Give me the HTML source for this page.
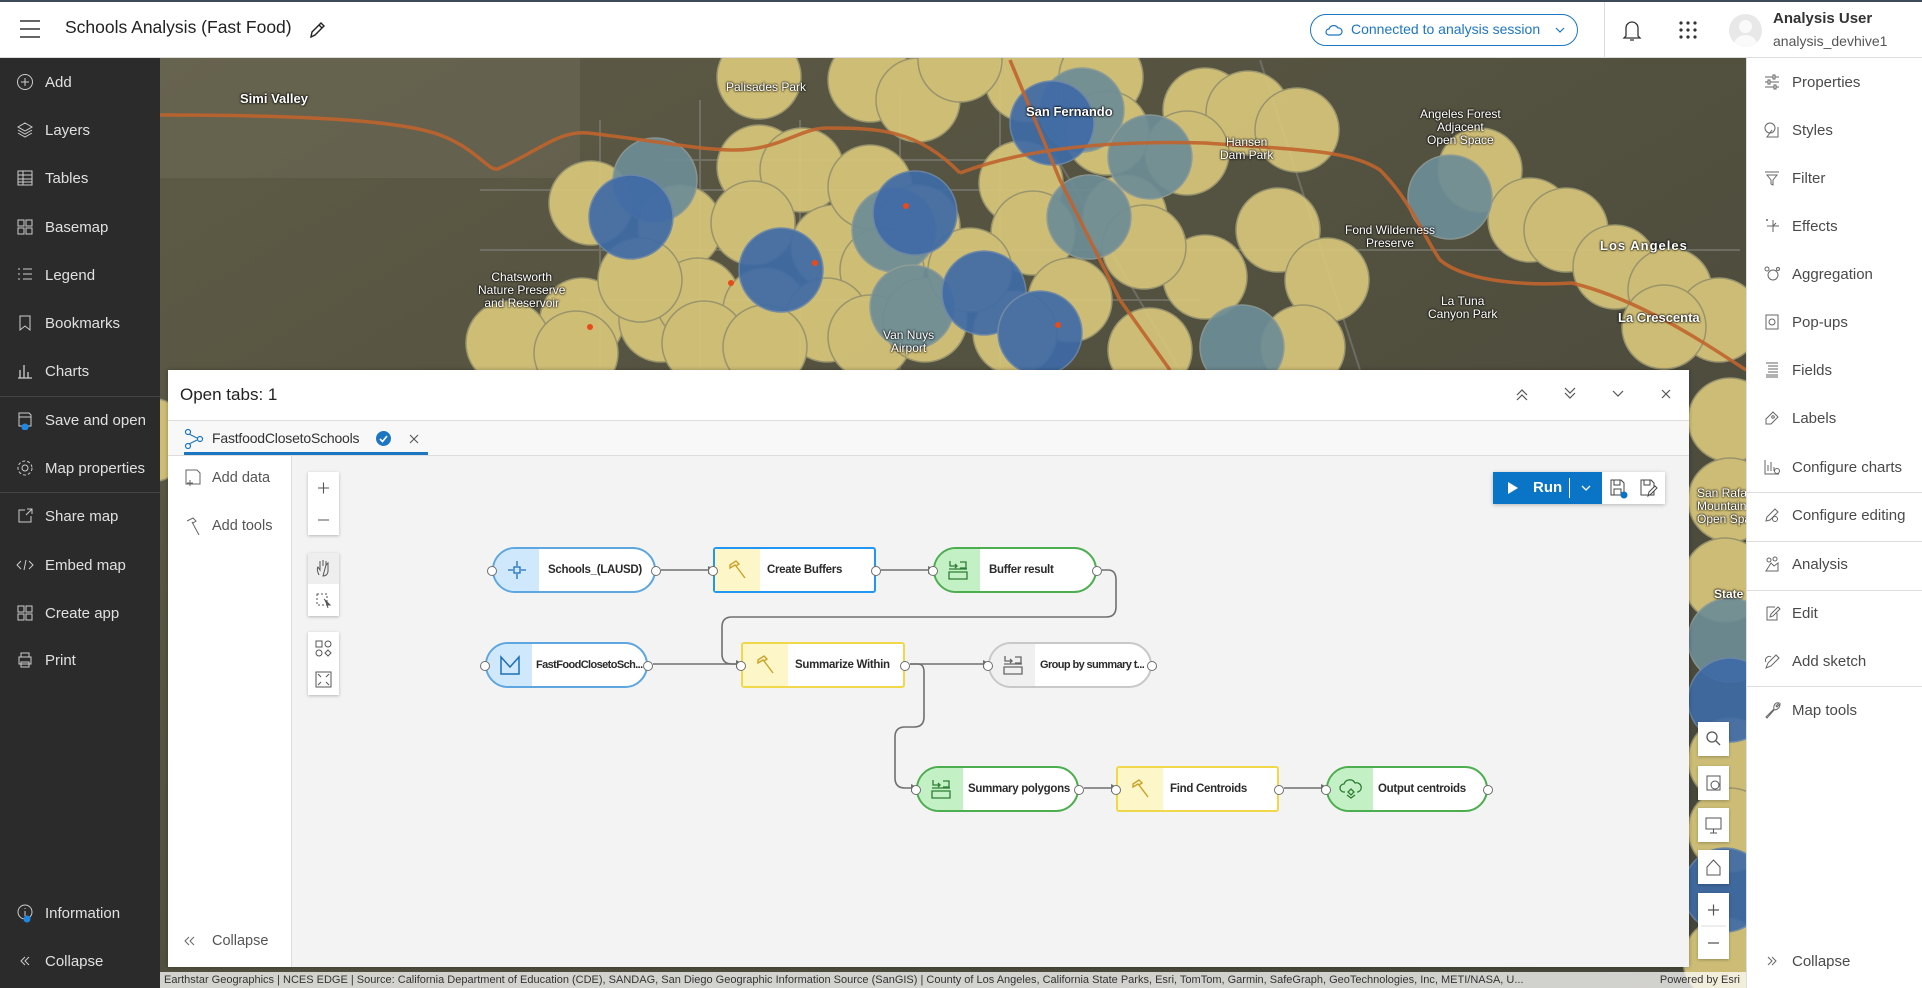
<!DOCTYPE html>
<html><head><meta charset="utf-8"><style>
*{box-sizing:border-box;margin:0;padding:0}
body{width:1922px;height:988px;overflow:hidden;font-family:"Liberation Sans",sans-serif;background:#fff;position:relative;color:#323232}
.abs{position:absolute}
#hdr{left:0;top:0;width:1922px;height:58px;background:#fff;border-top:2px solid #3d4a57;border-bottom:1px solid #ddd}
#ls{left:0;top:58px;width:160px;height:930px;background:#2b2b2b}
.li{position:absolute;left:0;width:160px;height:40px;color:#e0e0e0;font-size:15px;display:flex;align-items:center}
.li svg{position:absolute;left:16px}
.li span{position:absolute;left:45px}
.dv{position:absolute;left:0;width:160px;height:1px;background:#444}
#rs{left:1746px;top:58px;width:176px;height:930px;background:#fff;border-left:1px solid #ddd}
.ri{position:absolute;left:0;width:176px;height:40px;color:#4a4a4a;font-size:15px;display:flex;align-items:center}
.ri svg{position:absolute;left:16px}
.ri span{position:absolute;left:45px}
.rdv{position:absolute;left:0;width:176px;height:1px;background:#ddd}
.node{position:absolute;height:46px;background:#fff;border:2px solid;display:flex;align-items:center;font-size:11.5px;font-weight:bold;letter-spacing:-0.3px;color:#2b2b2b;overflow:visible}
.node .ic{position:absolute;left:0;top:0;bottom:0;width:45px;display:flex;align-items:center;justify-content:center}
.node .tx{position:absolute;left:54px;white-space:nowrap}
.port{position:absolute;top:17px;width:10px;height:10px;border-radius:50%;background:#fff;border:1.5px solid #6e6e6e}
.lbl{position:absolute;color:#fff;font-size:12px;text-shadow:0 0 2px #000,0 0 2px #000;text-align:center;line-height:13px}
.tb{position:absolute;background:#fff;box-shadow:0 1px 3px rgba(0,0,0,.25);width:31px}
</style></head><body>

<!-- MAP -->
<svg class="abs" style="left:0;top:0" width="1922" height="988">
<defs>
<linearGradient id="mg" x1="0" y1="0" x2="1" y2="1"><stop offset="0" stop-color="#5e5c46"/><stop offset=".4" stop-color="#545240"/><stop offset="1" stop-color="#46463a"/></linearGradient>
</defs>
<rect x="160" y="58" width="1586" height="930" fill="url(#mg)"/>
<rect x="160" y="58" width="420" height="120" fill="#6d6a58" opacity=".5"/>
<g fill="none" stroke="#8a8a86" stroke-width="2" opacity=".5">
<path d="M480 190H1100M480 250H1740M580 300H1200M600 120V370M700 100V370M800 120V370M900 90V370M1000 60V370M660 160H1000"/>
<path d="M1000 60L1180 370M1260 60L1360 370"/>
</g>
<g fill="#d8c67a" opacity=".92" stroke="#9f9a70" stroke-width="1.5">
<circle cx="759" cy="77" r="42"/><circle cx="870" cy="80" r="42"/><circle cx="918" cy="100" r="42"/><circle cx="591" cy="203" r="42"/><circle cx="759" cy="167" r="42"/><circle cx="802" cy="170" r="42"/><circle cx="680" cy="227" r="42"/><circle cx="753" cy="223" r="42"/><circle cx="833" cy="247" r="42"/><circle cx="870" cy="187" r="42"/><circle cx="918" cy="227" r="42"/><circle cx="882" cy="270" r="42"/><circle cx="582" cy="320" r="42"/><circle cx="508" cy="343" r="42"/><circle cx="576" cy="353" r="42"/><circle cx="661" cy="320" r="42"/><circle cx="698" cy="300" r="42"/><circle cx="765" cy="310" r="42"/><circle cx="827" cy="320" r="42"/><circle cx="870" cy="337" r="42"/><circle cx="925" cy="320" r="42"/><circle cx="704" cy="343" r="42"/><circle cx="765" cy="347" r="42"/>
<circle cx="1027" cy="80" r="42"/><circle cx="1101" cy="77" r="42"/><circle cx="1205" cy="110" r="42"/><circle cx="1248" cy="113" r="42"/><circle cx="1297" cy="130" r="42"/><circle cx="1187" cy="153" r="42"/><circle cx="1107" cy="133" r="42"/><circle cx="1021" cy="183" r="42"/><circle cx="1125" cy="217" r="42"/><circle cx="1033" cy="233" r="42"/><circle cx="1278" cy="230" r="42"/><circle cx="1327" cy="280" r="42"/><circle cx="1205" cy="277" r="42"/><circle cx="1144" cy="247" r="42"/><circle cx="1070" cy="300" r="42"/><circle cx="1015" cy="333" r="42"/><circle cx="1150" cy="350" r="42"/><circle cx="1303" cy="347" r="42"/><circle cx="1480" cy="170" r="42"/><circle cx="1530" cy="220" r="42"/><circle cx="1566" cy="230" r="42"/><circle cx="1615" cy="267" r="42"/><circle cx="1670" cy="290" r="42"/><circle cx="1719" cy="320" r="42"/><circle cx="1664" cy="327" r="42"/><circle cx="960" cy="60" r="42"/><circle cx="970" cy="270" r="42"/><circle cx="640" cy="280" r="42"/>
<circle cx="1730" cy="420" r="42"/><circle cx="1730" cy="500" r="42"/><circle cx="1725" cy="580" r="42"/><circle cx="1730" cy="760" r="42"/><circle cx="1730" cy="830" r="42"/><circle cx="1725" cy="960" r="42"/><circle cx="150" cy="440" r="42"/>
</g>
<g fill="#6d8d96" opacity=".92" stroke="#8b9a98" stroke-width="1.5">
<circle cx="655" cy="180" r="42"/><circle cx="894" cy="230" r="42"/><circle cx="912" cy="307" r="42"/><circle cx="1082" cy="110" r="42"/><circle cx="1150" cy="157" r="42"/><circle cx="1450" cy="197" r="42"/><circle cx="1089" cy="217" r="42"/><circle cx="1242" cy="347" r="42"/><circle cx="1730" cy="640" r="42"/>
</g>
<g fill="#3f6ba6" opacity=".92" stroke="#6b86a8" stroke-width="1.5">
<circle cx="631" cy="217" r="42"/><circle cx="781" cy="270" r="42"/><circle cx="915" cy="213" r="42"/><circle cx="1052" cy="123" r="42"/><circle cx="984" cy="293" r="42"/><circle cx="1040" cy="333" r="42"/><circle cx="1730" cy="700" r="42"/><circle cx="1725" cy="890" r="42"/>
</g>
<g fill="none" stroke="#c0642e" stroke-width="3.5" opacity=".9">
<path d="M160 115C300 115 400 120 440 135C480 150 490 175 500 168C540 150 560 130 588 133C650 140 700 150 735 150C780 150 800 128 827 128C880 128 918 130 960 173"/>
<path d="M960 173C1020 150 1100 140 1205 143C1300 150 1350 150 1380 170C1410 200 1420 230 1440 260C1470 285 1540 285 1572 283C1640 300 1700 340 1746 370"/>
<path d="M1010 60L1060 180L1120 300L1170 370"/>
</g>
<g fill="#e84a1a"><circle cx="906" cy="206" r="3"/><circle cx="815" cy="263" r="3"/><circle cx="731" cy="283" r="3"/><circle cx="590" cy="327" r="3"/><circle cx="1058" cy="325" r="3"/></g>
</svg>
<div class="lbl" style="left:240px;top:92px;font-weight:bold;font-size:13px">Simi Valley</div>
<div class="lbl" style="left:726px;top:81px">Palisades Park</div>
<div class="lbl" style="left:1026px;top:105px;font-weight:bold;font-size:13px">San Fernando</div>
<div class="lbl" style="left:1220px;top:136px">Hansen<br>Dam Park</div>
<div class="lbl" style="left:1420px;top:108px">Angeles Forest<br>Adjacent<br>Open Space</div>
<div class="lbl" style="left:1345px;top:224px">Fond Wilderness<br>Preserve</div>
<div class="lbl" style="left:1600px;top:239px;font-weight:bold;font-size:13px;letter-spacing:1px">Los Angeles</div>
<div class="lbl" style="left:1428px;top:295px">La Tuna<br>Canyon Park</div>
<div class="lbl" style="left:1618px;top:311px;font-weight:bold;font-size:13px">La Crescenta</div>
<div class="lbl" style="left:478px;top:271px">Chatsworth<br>Nature Preserve<br>and Reservoir</div>
<div class="lbl" style="left:883px;top:329px">Van Nuys<br>Airport</div>
<div class="lbl" style="left:1697px;top:487px;text-align:left">San Rafa<br>Mountain<br>Open Spa</div>
<div class="lbl" style="left:1714px;top:588px;font-weight:bold">State</div>

<!-- attribution -->
<div class="abs" style="left:160px;top:972px;width:1586px;height:16px;background:rgba(255,255,255,.75);font-size:11px;color:#333;line-height:16px;padding-left:4px;white-space:nowrap;overflow:hidden">Earthstar Geographics | NCES EDGE | Source: California Department of Education (CDE), SANDAG, San Diego Geographic Information Source (SanGIS) | County of Los Angeles, California State Parks, Esri, TomTom, Garmin, SafeGraph, GeoTechnologies, Inc, METI/NASA, U...<span style="position:absolute;right:6px;top:0">Powered by Esri</span></div>

<!-- map widgets right -->
<div class="tb" style="left:1698px;top:722px;height:34px"><svg width="31" height="34"><circle cx="14" cy="15" r="5" fill="none" stroke="#555" stroke-width="1.3"/><path d="M18 19L22 23" stroke="#555" stroke-width="1.3"/></svg></div>
<div class="tb" style="left:1698px;top:766px;height:34px"><svg width="31" height="34"><rect x="9" y="10" width="13" height="14" fill="none" stroke="#555"/><circle cx="17" cy="19" r="4" fill="none" stroke="#555"/></svg></div>
<div class="tb" style="left:1698px;top:808px;height:34px"><svg width="31" height="34"><rect x="8" y="10" width="15" height="11" fill="none" stroke="#555"/><path d="M15.5 21V25M12 25H19" stroke="#555"/></svg></div>
<div class="tb" style="left:1698px;top:850px;height:34px"><svg width="31" height="34"><path d="M9 17L15.5 10L22 17V25H9Z" fill="none" stroke="#555"/></svg></div>
<div class="tb" style="left:1698px;top:893px;height:66px"><svg width="31" height="66"><path d="M10 17H21M15.5 11.5V22.5M10 50H21" stroke="#555" stroke-width="1.2"/><path d="M3 33H28" stroke="#ddd"/></svg></div>

<!-- HEADER -->
<div id="hdr" class="abs">
<svg class="abs" style="left:18px;top:16px" width="24" height="22"><path d="M2 3H22M2 11H22M2 19H22" stroke="#333" stroke-width="1.5"/></svg>
<div class="abs" style="left:65px;top:15px;font-size:17.5px;color:#222">Schools Analysis (Fast Food)</div>
<svg class="abs" style="left:308px;top:18px" width="18" height="20"><path d="M3 17L4 12L13 3L16 6L7 15Z M11 5L14 8" fill="none" stroke="#222" stroke-width="1.4"/></svg>
<div class="abs" style="left:1310px;top:12px;width:268px;height:32px;border:1.5px solid #1d76c1;border-radius:16px;color:#1d76c1;font-size:14px;line-height:29px;padding-left:40px">Connected to analysis session<svg class="abs" style="left:14px;top:8px" width="18" height="14"><path d="M4 12H14A3.5 3.5 0 0 0 13 5A5 5 0 0 0 4 6A3 3 0 0 0 4 12Z" fill="none" stroke="#1d76c1" stroke-width="1.2"/></svg><svg class="abs" style="left:244px;top:11px" width="10" height="8"><path d="M1 2L5 6L9 2" fill="none" stroke="#1d76c1" stroke-width="1.2"/></svg></div>
<div class="abs" style="left:1604px;top:0;width:1px;height:56px;background:#ddd"></div>
<svg class="abs" style="left:1620px;top:16px" width="24" height="26"><path d="M6 18V10A6 6 0 0 1 18 10V18L20 20H4Z M10 22H14" fill="none" stroke="#333" stroke-width="1.3"/></svg>
<svg class="abs" style="left:1678px;top:18px" width="20" height="20"><g fill="#333"><circle cx="3" cy="3" r="1.6"/><circle cx="10" cy="3" r="1.6"/><circle cx="17" cy="3" r="1.6"/><circle cx="3" cy="10" r="1.6"/><circle cx="10" cy="10" r="1.6"/><circle cx="17" cy="10" r="1.6"/><circle cx="3" cy="17" r="1.6"/><circle cx="10" cy="17" r="1.6"/><circle cx="17" cy="17" r="1.6"/></g></svg>
<div class="abs" style="left:1729px;top:12px;width:33px;height:33px;border-radius:50%;background:#e8e8e8;overflow:hidden"><div class="abs" style="left:10px;top:6px;width:13px;height:13px;border-radius:50%;background:#fafafa"></div><div class="abs" style="left:5px;top:21px;width:23px;height:20px;border-radius:50%;background:#fafafa"></div></div>
<div class="abs" style="left:1773px;top:8px;font-size:15px;font-weight:bold;color:#333">Analysis User</div>
<div class="abs" style="left:1773px;top:31px;font-size:14px;color:#555">analysis_devhive1</div>
</div>

<!-- LEFT SIDEBAR -->
<div id="ls" class="abs">
<div class="li" style="top:4px"><svg width="18" height="18"><circle cx="9" cy="9" r="7.5" fill="none" stroke="#ccc"/><path d="M9 5V13M5 9H13" stroke="#ccc"/></svg><span>Add</span></div>
<div class="li" style="top:52px"><svg width="18" height="18"><path d="M9 2L16 6L9 10L2 6Z M2 9L9 13L16 9 M2 12L9 16L16 12" fill="none" stroke="#ccc"/></svg><span>Layers</span></div>
<div class="li" style="top:100px"><svg width="18" height="18"><rect x="2" y="2" width="14" height="14" fill="none" stroke="#ccc"/><path d="M2 6H16M2 10H16M2 13H16M7 2V16" stroke="#ccc"/></svg><span>Tables</span></div>
<div class="li" style="top:149px"><svg width="18" height="18"><g fill="none" stroke="#ccc"><rect x="2" y="2" width="6" height="6"/><rect x="10" y="2" width="6" height="6"/><rect x="2" y="10" width="6" height="6"/><rect x="10" y="10" width="6" height="6"/></g></svg><span>Basemap</span></div>
<div class="li" style="top:197px"><svg width="18" height="18"><path d="M2 3H4M7 3H16M2 8H4M7 8H16M2 13H4M7 13H16" stroke="#ccc"/></svg><span>Legend</span></div>
<div class="li" style="top:245px"><svg width="18" height="18"><path d="M4 2H14V16L9 12L4 16Z" fill="none" stroke="#ccc"/></svg><span>Bookmarks</span></div>
<div class="li" style="top:293px"><svg width="18" height="18"><path d="M2 16H16M4 16V8M8 16V3M12 16V10" stroke="#ccc" stroke-width="1.3"/></svg><span>Charts</span></div>
<div class="dv" style="top:338px"></div>
<div class="li" style="top:342px"><svg width="18" height="20"><path d="M3 3H13L15 5V16H3Z M3 7H15" fill="none" stroke="#ccc"/><circle cx="9" cy="17" r="3.5" fill="#1e88e5"/></svg><span>Save and open</span></div>
<div class="li" style="top:390px"><svg width="18" height="18"><circle cx="9" cy="9" r="3" fill="none" stroke="#ccc"/><circle cx="9" cy="9" r="7" fill="none" stroke="#ccc" stroke-dasharray="3 2"/></svg><span>Map properties</span></div>
<div class="dv" style="top:434px"></div>
<div class="li" style="top:438px"><svg width="18" height="18"><path d="M9 3H3V15H15V9M10 8L16 2M11 2H16V7" fill="none" stroke="#ccc"/></svg><span>Share map</span></div>
<div class="li" style="top:487px"><svg width="18" height="18"><path d="M5 5L1 9L5 13M13 5L17 9L13 13M10 4L8 14" fill="none" stroke="#ccc"/></svg><span>Embed map</span></div>
<div class="li" style="top:535px"><svg width="18" height="18"><g fill="none" stroke="#ccc"><rect x="2" y="2" width="6" height="6"/><rect x="10" y="2" width="6" height="6"/><rect x="2" y="10" width="6" height="6"/><rect x="10" y="10" width="6" height="6"/></g></svg><span>Create app</span></div>
<div class="li" style="top:582px"><svg width="18" height="18"><path d="M5 6V2H13V6M3 6H15V13H3Z M5 11H13V16H5Z" fill="none" stroke="#ccc"/></svg><span>Print</span></div>
<div class="li" style="top:835px"><svg width="18" height="20"><circle cx="9" cy="9" r="7" fill="none" stroke="#ccc"/><path d="M9 8V13M9 5V6" stroke="#ccc"/><circle cx="11" cy="16" r="3.5" fill="#1e88e5"/></svg><span>Information</span></div>
<div class="li" style="top:883px"><svg width="18" height="18"><path d="M9 5L5 9L9 13M13 5L9 9L13 13" fill="none" stroke="#ccc"/></svg><span>Collapse</span></div>
</div>

<!-- RIGHT SIDEBAR -->
<div id="rs" class="abs">
<div class="ri" style="top:4px"><svg width="18" height="18"><path d="M2 4H16M2 9H16M2 14H16" stroke="#666"/><rect x="10" y="2" width="2" height="4" fill="#fff" stroke="#666"/><rect x="5" y="7" width="2" height="4" fill="#fff" stroke="#666"/><rect x="11" y="12" width="2" height="4" fill="#fff" stroke="#666"/></svg><span>Properties</span></div>
<div class="ri" style="top:52px"><svg width="18" height="18"><circle cx="7" cy="7" r="5" fill="none" stroke="#666"/><path d="M9 9L4 16H15V6" fill="none" stroke="#666"/></svg><span>Styles</span></div>
<div class="ri" style="top:100px"><svg width="18" height="18"><path d="M2 3H16M4 6H14L10 11V16L8 15V11Z" fill="none" stroke="#666"/></svg><span>Filter</span></div>
<div class="ri" style="top:148px"><svg width="18" height="18"><path d="M10 3V15M4 9H16M10 9L13 6" stroke="#666"/><circle cx="4" cy="3" r="1" fill="#666"/></svg><span>Effects</span></div>
<div class="ri" style="top:196px"><svg width="18" height="18"><circle cx="10" cy="10" r="5" fill="none" stroke="#666"/><circle cx="4" cy="4" r="2" fill="none" stroke="#666"/><circle cx="15" cy="4" r="1.5" fill="none" stroke="#666"/></svg><span>Aggregation</span></div>
<div class="ri" style="top:244px"><svg width="18" height="18"><rect x="3" y="2" width="12" height="14" fill="none" stroke="#666"/><circle cx="9" cy="9" r="3" fill="none" stroke="#666"/></svg><span>Pop-ups</span></div>
<div class="ri" style="top:292px"><svg width="18" height="18"><path d="M3 2H15M5 5H15M5 8H15M5 11H15M3 14H15M3 16H15" stroke="#666"/></svg><span>Fields</span></div>
<div class="ri" style="top:340px"><svg width="18" height="18"><path d="M3 15L3 10L10 3L15 8L8 15Z" fill="none" stroke="#666"/><circle cx="10" cy="8" r="1.3" fill="none" stroke="#666"/></svg><span>Labels</span></div>
<div class="ri" style="top:389px"><svg width="18" height="18"><path d="M2 2V16H16M5 13V7M8 13V4M11 13V9" fill="none" stroke="#666"/><circle cx="14" cy="13" r="2.5" fill="none" stroke="#666"/></svg><span>Configure charts</span></div>
<div class="rdv" style="top:434px"></div>
<div class="ri" style="top:437px"><svg width="18" height="18"><path d="M3 15L4 11L12 3L15 6L7 14Z" fill="none" stroke="#666"/><circle cx="12" cy="13" r="2.5" fill="none" stroke="#666"/></svg><span>Configure editing</span></div>
<div class="rdv" style="top:483px"></div>
<div class="ri" style="top:486px"><svg width="18" height="18"><circle cx="6" cy="5" r="2" fill="none" stroke="#666"/><circle cx="12" cy="4" r="2" fill="none" stroke="#666"/><path d="M3 16L8 8L11 11L15 8V16Z" fill="none" stroke="#666"/></svg><span>Analysis</span></div>
<div class="rdv" style="top:532px"></div>
<div class="ri" style="top:535px"><svg width="18" height="18"><path d="M4 3H12M4 3V16H14V9M7 13L8 10L15 3L17 5L10 12Z" fill="none" stroke="#666"/></svg><span>Edit</span></div>
<div class="ri" style="top:583px"><svg width="18" height="18"><path d="M3 16L5 11L13 3L16 6L8 14Z M3 10C1 6 6 3 8 5" fill="none" stroke="#666"/></svg><span>Add sketch</span></div>
<div class="rdv" style="top:628px"></div>
<div class="ri" style="top:632px"><svg width="18" height="18"><path d="M3 16L11 8C10 4 13 1 16 2L13 5L14 6L17 3C17 7 14 9 11 9L4 17Z" fill="none" stroke="#666"/></svg><span>Map tools</span></div>
<div class="ri" style="top:883px"><svg width="18" height="18"><path d="M5 5L9 9L5 13M9 5L13 9L9 13" fill="none" stroke="#666"/></svg><span>Collapse</span></div>
</div>

<!-- FLOATING PANEL -->
<div class="abs" style="left:168px;top:370px;width:1521px;height:597px;background:#fff;box-shadow:0 0 4px rgba(0,0,0,.3)">
<div class="abs" style="left:12px;top:15px;font-size:17px;color:#222">Open tabs: 1</div>
<svg class="abs" style="left:1346px;top:17px" width="16" height="16"><path d="M3 8L8 3L13 8M3 13L8 8L13 13" fill="none" stroke="#555" stroke-width="1.2"/></svg>
<svg class="abs" style="left:1394px;top:15px" width="16" height="16"><path d="M3 3L8 8L13 3M3 8L8 13L13 8" fill="none" stroke="#555" stroke-width="1.2"/></svg>
<svg class="abs" style="left:1443px;top:18px" width="14" height="12"><path d="M2 3L7 8L12 3" fill="none" stroke="#555" stroke-width="1.2"/></svg>
<svg class="abs" style="left:1492px;top:18px" width="12" height="12"><path d="M2 2L10 10M10 2L2 10" stroke="#555" stroke-width="1.2"/></svg>
<div class="abs" style="left:0;top:50px;width:1521px;height:36px;background:#f8f8f8;border-top:1px solid #ddd;border-bottom:1px solid #ddd"></div>
<svg class="abs" style="left:16px;top:58px" width="20" height="22"><circle cx="4" cy="4" r="2.5" fill="none" stroke="#1d76c1" stroke-width="1.2"/><circle cx="4" cy="18" r="2.5" fill="none" stroke="#1d76c1" stroke-width="1.2"/><circle cx="16" cy="11" r="2.5" fill="none" stroke="#1d76c1" stroke-width="1.2"/><path d="M5 6L13 10M5 16L13 12" stroke="#1d76c1" stroke-width="1.2"/></svg>
<div class="abs" style="left:44px;top:60px;font-size:14px;color:#333;letter-spacing:-0.2px">FastfoodClosetoSchools</div>
<div class="abs" style="left:208px;top:61px;width:15px;height:15px;border-radius:50%;background:#1d76c1"><svg width="15" height="15"><path d="M4 8L6.5 10.5L11 5" fill="none" stroke="#fff" stroke-width="1.6"/></svg></div>
<svg class="abs" style="left:241px;top:64px" width="10" height="10"><path d="M1 1L9 9M9 1L1 9" stroke="#555" stroke-width="1.1"/></svg>
<div class="abs" style="left:16px;top:82px;width:244px;height:3px;background:#1d76c1"></div>
<!-- left column -->
<div class="abs" style="left:123px;top:86px;width:1px;height:511px;background:#ddd"></div>
<svg class="abs" style="left:15px;top:97px" width="20" height="22"><path d="M3 3H14L17 6V17H3Z" fill="none" stroke="#666"/><path d="M7 13V19M4 16H10" stroke="#666"/></svg>
<div class="abs" style="left:44px;top:100px;font-size:14.5px;color:#555">Add data</div>
<svg class="abs" style="left:15px;top:146px" width="20" height="22"><path d="M4 5L10 2L13 5L10 7L9 6L16 19" fill="none" stroke="#666"/></svg>
<div class="abs" style="left:44px;top:148px;font-size:14.5px;color:#555">Add tools</div>
<svg class="abs" style="left:15px;top:565px" width="14" height="12"><path d="M6 2L2 6L6 10M11 2L7 6L11 10" fill="none" stroke="#666"/></svg>
<div class="abs" style="left:44px;top:563px;font-size:14.5px;color:#555">Collapse</div>
<!-- canvas -->
<div class="abs" style="left:124px;top:86px;width:1397px;height:511px;background:#f3f3f3"></div>
</div>

<!-- canvas tools -->
<div class="tb" style="left:308px;top:472px;height:63px"><svg width="31" height="63"><path d="M10 16H21M15.5 10.5V21.5M10 48H21" stroke="#555" stroke-width="1.1"/></svg></div>
<div class="tb" style="left:308px;top:553px;height:63px;background:#fff"><div class="abs" style="left:0;top:0;width:31px;height:31px;background:#eee"></div><svg class="abs" style="left:0;top:0" width="31" height="63"><path d="M11 22C9 18 9 15 10 14L12 17V9M12 13V8M15 13V7M18 13V8M18 12L20 10L20 18C20 21 18 23 15 23Z" fill="none" stroke="#555"/><rect x="9" y="41" width="10" height="11" fill="none" stroke="#555" stroke-dasharray="2 2"/><path d="M16 46L22 52L19 52L20 55" fill="#555" stroke="#555"/></svg></div>
<div class="tb" style="left:308px;top:632px;height:63px"><svg width="31" height="63"><g fill="none" stroke="#555"><rect x="8" y="9" width="6" height="6"/><circle cx="20" cy="12" r="3"/><circle cx="11" cy="21" r="3"/><path d="M20 18L23 21L20 24L17 21Z"/><rect x="8" y="40" width="15" height="15"/><path d="M10 42L13 45M21 42L18 45M10 53L13 50M21 53L18 50"/></g></svg></div>

<!-- run group -->
<div class="abs" style="left:1493px;top:472px;width:172px;height:32px;background:#fff;box-shadow:0 1px 4px rgba(0,0,0,.25)">
<div class="abs" style="left:0;top:0;width:109px;height:32px;background:#0a74c6;color:#fff;font-size:15px;font-weight:bold;line-height:32px"><svg class="abs" style="left:14px;top:9px" width="12" height="14"><path d="M1 1L11 7L1 13Z" fill="#fff"/></svg><span class="abs" style="left:40px">Run</span><div class="abs" style="left:76px;top:6px;width:1px;height:20px;background:#fff"></div><svg class="abs" style="left:87px;top:12px" width="12" height="8"><path d="M2 2L6 6L10 2" fill="none" stroke="#fff" stroke-width="1.3"/></svg></div>
<svg class="abs" style="left:115px;top:6px" width="22" height="22"><path d="M3 2H13L16 5V17H3Z M6 2V7H12V2 M6 17V11H13V17" fill="none" stroke="#444"/><circle cx="16" cy="17" r="3.5" fill="#0a74c6"/></svg>
<svg class="abs" style="left:145px;top:6px" width="22" height="22"><path d="M3 2H13L16 5V17H3Z M6 2V7H12V2" fill="none" stroke="#444"/><path d="M10 18L11 14L17 8L19 10L13 16Z" fill="#fff" stroke="#444"/></svg>
</div>

<!-- connectors -->
<svg class="abs" style="left:0;top:0" width="1922" height="988">
<g fill="none" stroke="#707070" stroke-width="1.6">
<path d="M661 570H708"/><path d="M881 570H928"/>
<path d="M1102 570H1108Q1116 570 1116 580V607Q1116 617 1106 617H732Q722 617 722 627V654Q722 664 732 664H736"/>
<path d="M653 664H736"/>
<path d="M910 664H983"/>
<path d="M910 664H918Q924 664 924 672V717Q924 727 914 727H905Q895 727 895 737V778Q895 788 905 788H911"/>
<path d="M1084 788H1111"/><path d="M1284 788H1321"/>
</g>
<g fill="#707070">
<path d="M708 566L716 570L708 574Z"/><path d="M928 566L936 570L928 574Z"/><path d="M736 660L744 664L736 668Z"/><path d="M983 660L991 664L983 668Z"/><path d="M911 784L919 788L911 792Z"/><path d="M1111 784L1119 788L1111 792Z"/><path d="M1321 784L1329 788L1321 792Z"/>
</g>
</svg>

<!-- nodes -->
<div class="node" style="left:492px;top:547px;width:164px;border-color:#5ea6df;border-radius:23px"><div class="ic" style="background:#cfe8fc;border-radius:21px 0 0 21px"><svg width="24" height="24"><rect x="9" y="9" width="6" height="6" fill="none" stroke="#1d6fb8" stroke-width="1.3"/><path d="M12 3V8M12 16V21M3 12H8M16 12H21" stroke="#1d6fb8" stroke-width="1.3"/></svg></div><span class="tx">Schools_(LAUSD)</span><div class="port" style="left:-7px"></div><div class="port" style="right:-7px"></div></div>

<div class="node" style="left:713px;top:547px;width:163px;border-color:#2196f3;border-radius:3px"><div class="ic" style="background:#fdf6c8"><svg width="24" height="24"><path d="M4 7L10 3L13 6L10 8L9 7L4 10Z M10 8L19 20" fill="none" stroke="#c9a227" stroke-width="1.4"/></svg></div><span class="tx" style="left:52px">Create Buffers</span><div class="port" style="left:-7px"></div><div class="port" style="right:-7px"></div></div>

<div class="node" style="left:933px;top:547px;width:164px;border-color:#4cae4f;border-radius:23px"><div class="ic" style="background:#c4f0c6;border-radius:21px 0 0 21px"><svg width="24" height="24"><path d="M4 3V8H11M9 6L11 8L9 10M14 4H20V10H14M3 14H21V21H3Z M3 11H21" fill="none" stroke="#2e7d32" stroke-width="1.3"/></svg></div><span class="tx">Buffer result</span><div class="port" style="left:-7px"></div><div class="port" style="right:-7px"></div></div>

<div class="node" style="left:485px;top:642px;width:163px;border-color:#5ea6df;border-radius:23px"><div class="ic" style="background:#cfe8fc;border-radius:21px 0 0 21px"><svg width="26" height="26"><path d="M4 5L13 15L22 5V22H4Z" fill="none" stroke="#1d6fb8" stroke-width="1.5"/></svg></div><span class="tx" style="left:49px;font-size:11px;letter-spacing:-0.6px">FastFoodClosetoSch...</span><div class="port" style="left:-7px"></div><div class="port" style="right:-7px"></div></div>

<div class="node" style="left:741px;top:642px;width:164px;border-color:#f0d84a;border-radius:3px"><div class="ic" style="background:#fdf6c8"><svg width="24" height="24"><path d="M4 7L10 3L13 6L10 8L9 7L4 10Z M10 8L19 20" fill="none" stroke="#c9a227" stroke-width="1.4"/></svg></div><span class="tx" style="left:52px">Summarize Within</span><div class="port" style="left:-7px"></div><div class="port" style="right:-7px"></div></div>

<div class="node" style="left:988px;top:642px;width:164px;border-color:#c8c8c8;border-radius:23px"><div class="ic" style="background:#f0f0f0;border-radius:21px 0 0 21px"><svg width="24" height="24"><path d="M4 3V8H11M9 6L11 8L9 10M14 4H20V10H14M3 14H21V21H3Z M3 11H21" fill="none" stroke="#666" stroke-width="1.3"/></svg></div><span class="tx" style="left:50px;font-size:11px;letter-spacing:-0.6px">Group by summary t...</span><div class="port" style="left:-7px"></div><div class="port" style="right:-7px"></div></div>

<div class="node" style="left:916px;top:766px;width:163px;border-color:#4cae4f;border-radius:23px"><div class="ic" style="background:#c4f0c6;border-radius:21px 0 0 21px"><svg width="24" height="24"><path d="M4 3V8H11M9 6L11 8L9 10M14 4H20V10H14M3 14H21V21H3Z M3 11H21" fill="none" stroke="#2e7d32" stroke-width="1.3"/></svg></div><span class="tx" style="left:50px">Summary polygons</span><div class="port" style="left:-7px"></div><div class="port" style="right:-7px"></div></div>

<div class="node" style="left:1116px;top:766px;width:163px;border-color:#f0d84a;border-radius:3px"><div class="ic" style="background:#fdf6c8"><svg width="24" height="24"><path d="M4 7L10 3L13 6L10 8L9 7L4 10Z M10 8L19 20" fill="none" stroke="#c9a227" stroke-width="1.4"/></svg></div><span class="tx" style="left:52px">Find Centroids</span><div class="port" style="left:-7px"></div><div class="port" style="right:-7px"></div></div>

<div class="node" style="left:1326px;top:766px;width:162px;border-color:#4cae4f;border-radius:23px"><div class="ic" style="background:#c4f0c6;border-radius:21px 0 0 21px"><svg width="26" height="26"><path d="M7 16H6A4 4 0 0 1 6 8A6 6 0 0 1 17 7A4.5 4.5 0 0 1 20 16H19" fill="none" stroke="#2e7d32" stroke-width="1.3"/><path d="M13 13L16 16L13 19L10 16Z M9 19L13 22L17 19" fill="none" stroke="#2e7d32" stroke-width="1.3"/></svg></div><span class="tx" style="left:50px">Output centroids</span><div class="port" style="left:-7px"></div><div class="port" style="right:-7px"></div></div>

</body></html>
